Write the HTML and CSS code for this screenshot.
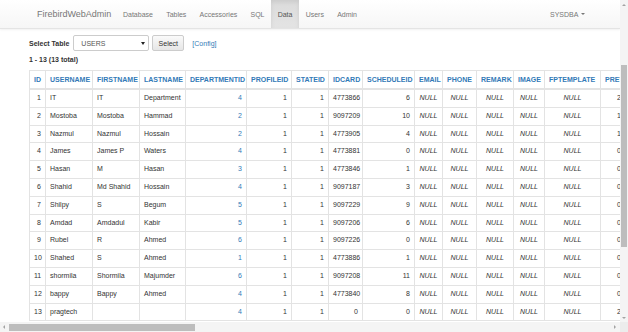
FILE: index.html
```html
<!DOCTYPE html>
<html lang="en">
<head>
  <meta charset="UTF-8">
  <title>FirebirdWebAdmin - Data</title>
  <link rel="stylesheet" href="styles.css">
</head>
<body>
<div class="window">
  <div class="frame">
    <div class="main">
      <nav class="navbar">
        <a class="brand" href="#">FirebirdWebAdmin</a>
        <ul class="nav">
          <li><a href="#">Database</a></li>
          <li><a href="#">Tables</a></li>
          <li><a href="#">Accessories</a></li>
          <li><a href="#">SQL</a></li>
          <li class="active"><a href="#">Data</a></li>
          <li><a href="#">Users</a></li>
          <li><a href="#">Admin</a></li>
        </ul>
        <ul class="nav nav-right">
          <li><a href="#">SYSDBA <span class="caret"></span></a></li>
        </ul>
      </nav>

      <div class="container">
        <form class="select-form">
          <label>Select Table</label>
          <div class="select-box"><span>USERS</span><span class="arrow"></span></div>
          <button type="button">Select</button>
          <a class="config" href="#">[Config]</a>
        </form>
        <p class="total">1 - 13 (13 total)</p>

        <table class="data">
          <colgroup>
            <col class="c-id"><col class="c-user"><col class="c-first"><col class="c-last">
            <col class="c-dep"><col class="c-prof"><col class="c-state"><col class="c-card">
            <col class="c-sched"><col class="c-mail"><col class="c-phone"><col class="c-rem">
            <col class="c-img"><col class="c-fp"><col class="c-prev">
          </colgroup>
          <thead>
            <tr>
              <th><a href="#">ID</a></th><th><a href="#">USERNAME</a></th><th><a href="#">FIRSTNAME</a></th>
              <th><a href="#">LASTNAME</a></th><th><a href="#">DEPARTMENTID</a></th><th><a href="#">PROFILEID</a></th>
              <th><a href="#">STATEID</a></th><th><a href="#">IDCARD</a></th><th><a href="#">SCHEDULEID</a></th>
              <th><a href="#">EMAIL</a></th><th><a href="#">PHONE</a></th><th><a href="#">REMARK</a></th>
              <th><a href="#">IMAGE</a></th><th><a href="#">FPTEMPLATE</a></th><th><a href="#">PREV</a></th>
            </tr>
          </thead>
          <tbody>
            <tr><td class="num">1</td><td>IT</td><td>IT</td><td>Department</td><td class="num"><a href="#">4</a></td><td class="num">1</td><td class="num">1</td><td>4773866</td><td class="num">6</td><td class="null">NULL</td><td class="null">NULL</td><td class="null">NULL</td><td class="null">NULL</td><td class="null">NULL</td><td class="prev">2</td></tr>
            <tr><td class="num">2</td><td>Mostoba</td><td>Mostoba</td><td>Hammad</td><td class="num"><a href="#">2</a></td><td class="num">1</td><td class="num">1</td><td>9097209</td><td class="num">10</td><td class="null">NULL</td><td class="null">NULL</td><td class="null">NULL</td><td class="null">NULL</td><td class="null">NULL</td><td class="prev">1</td></tr>
            <tr><td class="num">3</td><td>Nazmul</td><td>Nazmul</td><td>Hossain</td><td class="num"><a href="#">2</a></td><td class="num">1</td><td class="num">1</td><td>4773905</td><td class="num">4</td><td class="null">NULL</td><td class="null">NULL</td><td class="null">NULL</td><td class="null">NULL</td><td class="null">NULL</td><td class="prev">1</td></tr>
            <tr><td class="num">4</td><td>James</td><td>James P</td><td>Waters</td><td class="num"><a href="#">4</a></td><td class="num">1</td><td class="num">1</td><td>4773881</td><td class="num">0</td><td class="null">NULL</td><td class="null">NULL</td><td class="null">NULL</td><td class="null">NULL</td><td class="null">NULL</td><td class="prev">0</td></tr>
            <tr><td class="num">5</td><td>Hasan</td><td>M</td><td>Hasan</td><td class="num"><a href="#">3</a></td><td class="num">1</td><td class="num">1</td><td>4773846</td><td class="num">1</td><td class="null">NULL</td><td class="null">NULL</td><td class="null">NULL</td><td class="null">NULL</td><td class="null">NULL</td><td class="prev">0</td></tr>
            <tr><td class="num">6</td><td>Shahid</td><td>Md Shahid</td><td>Hossain</td><td class="num"><a href="#">4</a></td><td class="num">1</td><td class="num">1</td><td>9097187</td><td class="num">3</td><td class="null">NULL</td><td class="null">NULL</td><td class="null">NULL</td><td class="null">NULL</td><td class="null">NULL</td><td class="prev">0</td></tr>
            <tr><td class="num">7</td><td>Shilpy</td><td>S</td><td>Begum</td><td class="num"><a href="#">5</a></td><td class="num">1</td><td class="num">1</td><td>9097229</td><td class="num">9</td><td class="null">NULL</td><td class="null">NULL</td><td class="null">NULL</td><td class="null">NULL</td><td class="null">NULL</td><td class="prev">0</td></tr>
            <tr><td class="num">8</td><td>Amdad</td><td>Amdadul</td><td>Kabir</td><td class="num"><a href="#">5</a></td><td class="num">1</td><td class="num">1</td><td>9097206</td><td class="num">6</td><td class="null">NULL</td><td class="null">NULL</td><td class="null">NULL</td><td class="null">NULL</td><td class="null">NULL</td><td class="prev">0</td></tr>
            <tr><td class="num">9</td><td>Rubel</td><td>R</td><td>Ahmed</td><td class="num"><a href="#">6</a></td><td class="num">1</td><td class="num">1</td><td>9097226</td><td class="num">0</td><td class="null">NULL</td><td class="null">NULL</td><td class="null">NULL</td><td class="null">NULL</td><td class="null">NULL</td><td class="prev">0</td></tr>
            <tr><td class="num">10</td><td>Shahed</td><td>S</td><td>Ahmed</td><td class="num"><a href="#">1</a></td><td class="num">1</td><td class="num">1</td><td>4773886</td><td class="num">1</td><td class="null">NULL</td><td class="null">NULL</td><td class="null">NULL</td><td class="null">NULL</td><td class="null">NULL</td><td class="prev">0</td></tr>
            <tr><td class="num">11</td><td>shormila</td><td>Shormila</td><td>Majumder</td><td class="num"><a href="#">6</a></td><td class="num">1</td><td class="num">1</td><td>9097208</td><td class="num">11</td><td class="null">NULL</td><td class="null">NULL</td><td class="null">NULL</td><td class="null">NULL</td><td class="null">NULL</td><td class="prev">0</td></tr>
            <tr><td class="num">12</td><td>bappy</td><td>Bappy</td><td>Ahmed</td><td class="num"><a href="#">4</a></td><td class="num">1</td><td class="num">1</td><td>4773840</td><td class="num">8</td><td class="null">NULL</td><td class="null">NULL</td><td class="null">NULL</td><td class="null">NULL</td><td class="null">NULL</td><td class="prev">0</td></tr>
            <tr><td class="num">13</td><td>pragtech</td><td></td><td></td><td class="num"><a href="#">4</a></td><td class="num">1</td><td class="num">1</td><td class="num">0</td><td class="num">0</td><td class="null">NULL</td><td class="null">NULL</td><td class="null">NULL</td><td class="null">NULL</td><td class="null">NULL</td><td class="prev">2</td></tr>
          </tbody>
        </table>
      </div>
    </div>

    <!-- scrollbar verticale de la fenetre -->
    <div class="vbar">
      <span class="arr arr-up"></span>
      <div class="vtrack"><div class="vthumb"></div></div>
      <span class="arr arr-down"></span>
    </div>
  </div>

  <div class="hbar">
    <span class="arr arr-left"></span>
    <div class="htrack"><div class="hthumb"></div></div>
    <span class="arr arr-right"></span>
    <div class="corner"></div>
  </div>
</div>
</body>
</html>
```

FILE: styles.css
```css
body {
  margin: 0;
  font-family: "Liberation Sans", Arial, sans-serif;
  font-size: 7px;
  color: #333;
  background: #fff;
}
a {
  color: #337ab7;
  text-decoration: none;
}

.window {
  width: 628px;
  height: 332px;
  display: flex;
  flex-direction: column;
  overflow: hidden;
}
.frame {
  display: flex;
  height: 322px;
}
.main {
  width: 620px;
  flex-shrink: 0;
  overflow: hidden;
}

/* navbar */
.navbar {
  display: flex;
  align-items: stretch;
  height: 28px;
  padding: 0 28px 0 29px;
  background: linear-gradient(#fff, #f6f6f6);
  border-bottom: 1px solid #e4e4e4;
  box-shadow: 0 1px 2px rgba(0, 0, 0, 0.06);
}
.brand {
  display: flex;
  align-items: center;
  padding: 0 5px 0 8px;
  font-size: 9px;
  color: #777;
}
.nav {
  display: flex;
  list-style: none;
  margin: 0;
  padding: 0;
}
.nav li a {
  display: flex;
  align-items: center;
  height: 100%;
  padding: 0 6.6px;
  color: #777;
}
.nav li.active a {
  color: #555;
  background: linear-gradient(#dbdbdb, #e4e4e4);
  box-shadow: inset 0 2px 4px rgba(0, 0, 0, 0.08);
}
.nav-right {
  margin-left: auto;
}
.caret {
  display: inline-block;
  margin-left: 3px;
  border-top: 2px solid #777;
  border-left: 2px solid transparent;
  border-right: 2px solid transparent;
}

/* contenu */
.container {
  padding: 6px 0 0 29px;
}
.select-form {
  display: flex;
  align-items: center;
  height: 16px;
}
.select-form label {
  font-weight: bold;
  margin-right: 4px;
}
.select-box {
  display: flex;
  align-items: center;
  justify-content: space-between;
  box-sizing: border-box;
  width: 76px;
  height: 16px;
  padding: 0 3px 0 7px;
  border: 1px solid #ccc;
  border-radius: 2px;
  background: #fff;
  color: #555;
}
.arrow {
  border-top: 3px solid #222;
  border-left: 2px solid transparent;
  border-right: 2px solid transparent;
}
.select-form button {
  box-sizing: border-box;
  height: 16px;
  width: 32px;
  margin-left: 3px;
  padding: 0;
  font-family: inherit;
  font-size: 7px;
  color: #333;
  background: linear-gradient(#fafafa, #e6e6e6);
  border: 1px solid #ccc;
  border-radius: 2px;
}
.config {
  margin-left: 8px;
}
.total {
  margin: 4px 0 0;
  line-height: 10px;
  font-weight: bold;
}

/* table */
.data {
  table-layout: fixed;
  width: 631px;
  margin-top: 5px;
  border-collapse: collapse;
  white-space: nowrap;
}
.data th,
.data td {
  padding: 4px 4px;
  line-height: 8.8px;
  border: 1px solid #e3e3e3;
  text-align: left;
  overflow: hidden;
}
.data th {
  line-height: 9px;
  border-bottom-width: 2px;
}
.data td.num {
  text-align: right;
}
.data td.null {
  font-style: italic;
  text-align: center;
}
.data td.prev {
  padding-left: 16px;
}
.c-id { width: 16px; }
.c-user { width: 47px; }
.c-first { width: 47px; }
.c-last { width: 46px; }
.c-dep { width: 61px; }
.c-prof { width: 45px; }
.c-state { width: 37px; }
.c-card { width: 34px; }
.c-sched { width: 52px; }
.c-mail { width: 28px; }
.c-phone { width: 34px; }
.c-rem { width: 37px; }
.c-img { width: 31px; }
.c-fp { width: 56px; }
.c-prev { width: 60px; }

/* scrollbars */
.vbar {
  width: 8px;
  flex-shrink: 0;
  display: flex;
  flex-direction: column;
  align-items: center;
  background: #f4f4f4;
}
.vtrack {
  flex: 1;
  width: 100%;
  padding-top: 56px;
}
.vthumb {
  width: 6px;
  height: 182px;
  margin: 0 auto;
  background: #bdbdbd;
}
.hbar {
  display: flex;
  align-items: center;
  height: 10px;
  background: #f4f4f4;
}
.htrack {
  flex: 1;
  padding-left: 2px;
}
.hthumb {
  width: 186px;
  height: 7px;
  background: #bdbdbd;
}
.corner {
  width: 8px;
  height: 10px;
  background: #ececec;
}
.arr {
  display: block;
  width: 0;
  height: 0;
}
.arr-up {
  margin: 4px 0 3px;
  border-bottom: 2px solid #a3a3a3;
  border-left: 2px solid transparent;
  border-right: 2px solid transparent;
}
.arr-down {
  margin: 3px 0 3px;
  border-top: 2px solid #a3a3a3;
  border-left: 2px solid transparent;
  border-right: 2px solid transparent;
}
.arr-left {
  margin: 0 2px 0 3px;
  border-right: 2px solid #a3a3a3;
  border-top: 2px solid transparent;
  border-bottom: 2px solid transparent;
}
.arr-right {
  margin: 0 4px 0 2px;
  border-left: 2px solid #a3a3a3;
  border-top: 2px solid transparent;
  border-bottom: 2px solid transparent;
}
```
